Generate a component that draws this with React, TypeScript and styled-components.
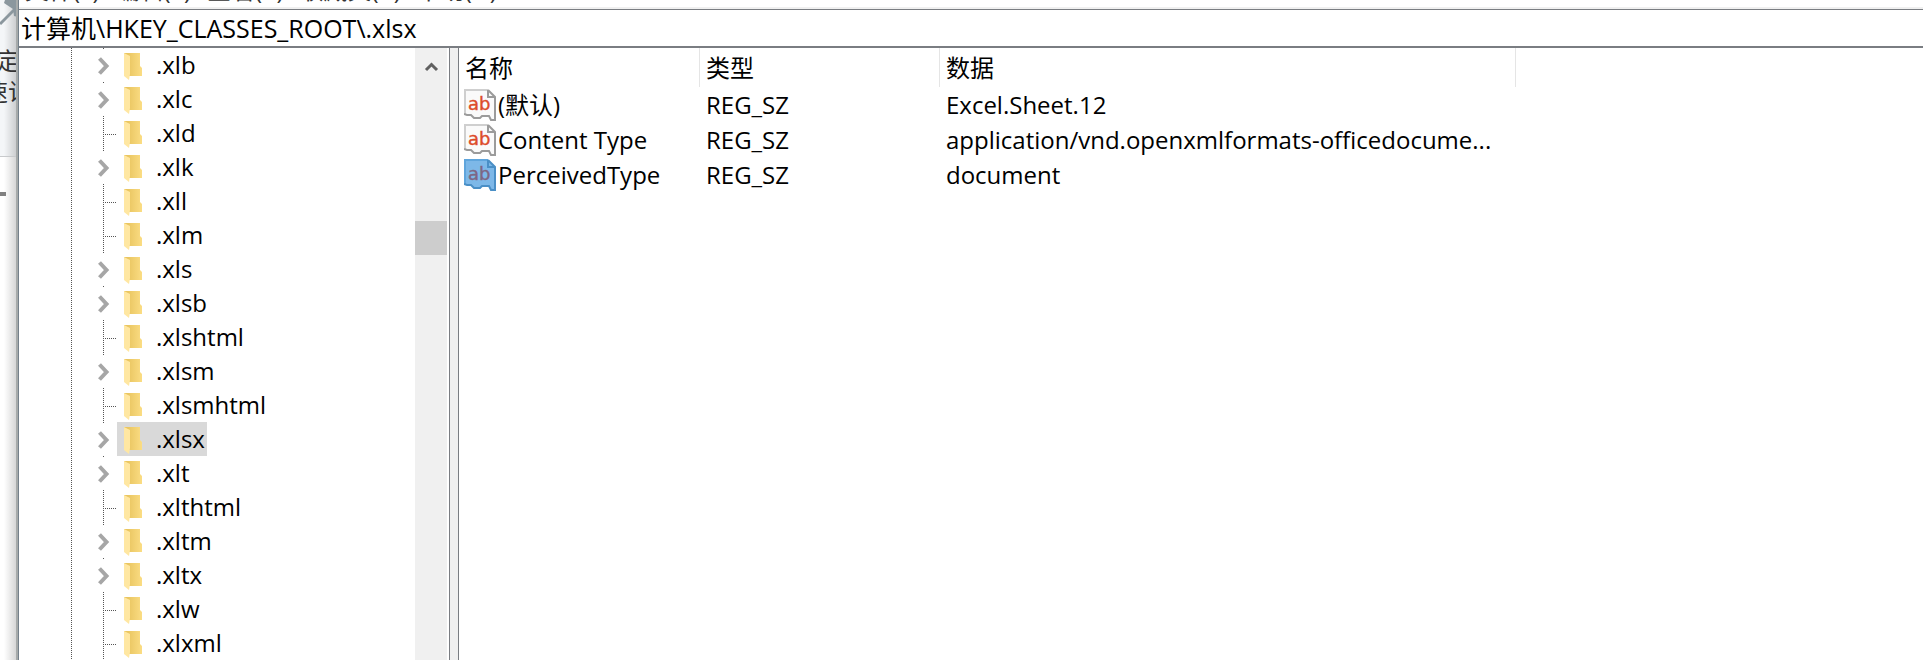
import React from 'react';
import styled, { createGlobalStyle, css } from 'styled-components';

const Global = createGlobalStyle`
  * { box-sizing: border-box; }
  html, body, #root { height: 100%; }
  body {
    margin: 0;
    overflow: hidden;
    background: #fff;
    color: #000;
    font: 24px/34px "Open Sans", "Noto Sans CJK SC", sans-serif;
  }
`;

const Desktop = styled.div`
  display: flex;
  height: 100%;
  overflow: hidden;
`;

const shadow = 'linear-gradient(to right, transparent 4px, rgba(0, 0, 0, 0.16))';

const Backdrop = styled.aside`
  flex: none;
  width: 18px;
  overflow: hidden;
  display: flex;
  flex-direction: column;
  color: #333;
  border-right: 2px solid #a6aaaa;
  background: ${shadow}, #fff;
`;

const BackdropRibbon = styled.div`
  height: 157px;
  flex: none;
  border-bottom: 1px solid #c8cacc;
  background: ${shadow}, #f4f6f8;
  svg { display: block; }
`;

const BackdropText = styled.div`
  display: flex;
  justify-content: center;
  height: 31px;
  line-height: 31px;
  white-space: nowrap;
`;

const BackdropDash = styled.div`
  margin-top: 35px;
  width: 6px;
  height: 4px;
  background: #808080;
`;

const Window = styled.div`
  flex: 1;
  min-width: 0;
  display: flex;
  flex-direction: column;
  border-left: 1px solid #74808a;
`;

const MenuBar = styled.nav`
  flex: none;
  height: 9px;
  display: flex;
  align-items: flex-end;
  gap: 16px;
  padding: 0 6px 5px;
  overflow: hidden;
  border-bottom: 2px solid #f0f0f0;
`;

const MenuButton = styled.button`
  flex: none;
  border: 0;
  padding: 0;
  background: none;
  color: #333;
  font: inherit;
  line-height: 24px;
`;

const AddressInput = styled.input`
  flex: none;
  width: 100%;
  height: 39px;
  padding: 0 2px 3px;
  border: solid #7a7d82;
  border-width: 1px 0 2px;
  border-radius: 0;
  outline: 0;
  background: #fff;
  color: #000;
  font: inherit;
  font-size: 25px;
`;

const Panes = styled.main`
  flex: 1;
  min-height: 0;
  display: flex;
`;

const TreePane = styled.section`
  flex: none;
  width: 431px;
  display: flex;
  border-right: 1px solid #7a7d82;
`;

const dots = (direction: string) =>
  `repeating-linear-gradient(${direction}, #555 0 1px, transparent 1px 2px)`;

const Tree = styled.ul`
  flex: 1;
  margin: 0 0 0 52px;
  padding: 0 0 0 27px;
  list-style: none;
  overflow: hidden;
  background: ${dots('to bottom')} left top / 1px 100% no-repeat;
`;

const TreeRow = styled.li`
  display: flex;
  height: 34px;
`;

const Branch = styled.span`
  flex: none;
  width: 19px;
  background:
    ${dots('to bottom')} 5px 0 / 1px 100% no-repeat,
    ${dots('to right')} 5px 18px / 14px 1px no-repeat;
`;

const Expander = styled.button`
  flex: none;
  width: 19px;
  padding: 0;
  border: 0;
  background: linear-gradient(#555, #555) 5px 0 / 1px 1px no-repeat;
  svg { display: block; }
`;

const Key = styled.a<{ $selected: boolean }>`
  display: flex;
  padding: 0 2px 0 7px;
  gap: 13px;
  color: inherit;
  text-decoration: none;
  background: ${(p) => (p.$selected ? '#d9d9d9' : 'transparent')};
  svg { flex: none; }
`;

const ScrollBar = styled.div`
  flex: none;
  width: 34px;
  border-right: 2px solid #fff;
  background: #f0f0f0;
`;

const ScrollUp = styled.button`
  display: block;
  width: 32px;
  height: 34px;
  padding: 0;
  border: 0;
  background: none;
  svg { display: block; }
`;

const ScrollThumb = styled.div`
  margin-top: 139px;
  height: 34px;
  background: #cdcdcd;
`;

const Splitter = styled.div`
  flex: none;
  width: 8px;
  background: #f0f0f0;
`;

const ListPane = styled.section`
  flex: 1;
  min-width: 0;
  border-left: 1px solid #7a7d82;
`;

const Table = styled.table`
  width: 1057px;
  table-layout: fixed;
  border-collapse: separate;
  border-spacing: 0;
`;

const cell = css`
  padding: 0 6px;
  text-align: left;
  font-weight: 400;
  white-space: nowrap;
  overflow: hidden;
  text-overflow: ellipsis;
`;

const HeadCell = styled.th<{ $width: number }>`
  ${cell}
  width: ${(p) => p.$width}px;
  height: 39px;
  border-right: 1px solid #e5e5e5;
`;

const Cell = styled.td`
  ${cell}
  height: 35px;
`;

const NameCell = styled(Cell)`
  padding: 0 0 0 5px;
`;

const ValueName = styled.div`
  display: flex;
  gap: 2px;
  align-items: center;
  svg { flex: none; }
`;

const FolderIcon = () => (
  <svg width="19" height="34" viewBox="0 0 19 34" aria-hidden="true">
    <defs>
      <linearGradient id="folderBack" x1="0" x2="1">
        <stop offset="0.2" stopColor="#e9c560" />
        <stop offset="1" stopColor="#fbdd84" />
      </linearGradient>
    </defs>
    <path d="M0 5H16V18L18 20V28H0Z" fill="url(#folderBack)" />
    <path d="M0 5L6 8V26L5 32L0 28Z" fill="#ffe7a2" />
  </svg>
);

const ChevronRight = () => (
  <svg width="19" height="34" viewBox="0 0 19 34" aria-hidden="true">
    <path d="M1.500 10.500L8.500 18L1.500 25.500" fill="none" stroke="#a6a6a6" strokeWidth="4" />
  </svg>
);

const ChevronUp = () => (
  <svg width="32" height="34" viewBox="0 0 32 34" aria-hidden="true">
    <path d="M11 22L16.500 16.500L22 22" fill="none" stroke="#606060" strokeWidth="3" />
  </svg>
);

const IconLetters = styled.text`
  font: 18px "DejaVu Sans", sans-serif;
  stroke-width: 0.4px;
`;

const StringIcon = ({ selected }: { selected: boolean }) => {
  const edge = selected ? '#4a8fc6' : '#9b9b9b';
  const ink = selected ? '#7d6684' : '#dd4b2a';
  return (
    <svg width="32" height="32" viewBox="0 0 32 32" aria-hidden="true">
      <path
        d="M1 1H24L31 8V31H27L25 27H18L16 29H10L7 26H3L1 25Z"
        fill={selected ? '#7db8e8' : '#fafafa'}
      />
      <path d="M1 25V1H24" fill="none" stroke={selected ? '#5fa5dc' : '#cfcfcf'} strokeWidth="2" />
      <path
        d="M24 1V8H31M24 1L31 8V31H27L25 27H18L16 29H10L7 26H3L0 25"
        fill="none"
        stroke={edge}
        strokeWidth="2"
      />
      <IconLetters x="4" y="21" fill={ink} stroke={ink}>ab</IconLetters>
    </svg>
  );
};

const PinIcon = () => (
  <svg width="18" height="45" viewBox="0 0 18 45" aria-hidden="true">
    <path d="M5 0H18V17L14 16L13 9L4 3Z" fill="#8b979e" />
    <path d="M0 24L15 9" stroke="#8b979e" strokeWidth="3" />
  </svg>
);

const menus = ['文件(F)', '编辑(E)', '查看(V)', '收藏夹(A)', '帮助(H)'];

const keys: { name: string; expandable?: boolean }[] = [
  { name: '.xlb', expandable: true },
  { name: '.xlc', expandable: true },
  { name: '.xld' },
  { name: '.xlk', expandable: true },
  { name: '.xll' },
  { name: '.xlm' },
  { name: '.xls', expandable: true },
  { name: '.xlsb', expandable: true },
  { name: '.xlshtml' },
  { name: '.xlsm', expandable: true },
  { name: '.xlsmhtml' },
  { name: '.xlsx', expandable: true },
  { name: '.xlt', expandable: true },
  { name: '.xlthtml' },
  { name: '.xltm', expandable: true },
  { name: '.xltx', expandable: true },
  { name: '.xlw' },
  { name: '.xlxml' },
];

const values = [
  { name: '(默认)', type: 'REG_SZ', data: 'Excel.Sheet.12' },
  { name: 'Content Type', type: 'REG_SZ', data: 'application/vnd.openxmlformats-officedocume...' },
  { name: 'PerceivedType', type: 'REG_SZ', data: 'document' },
];

export default function App() {
  const selectedKey = '.xlsx';
  const selectedValue = 'PerceivedType';
  return (
    <>
      <Global />
      <Desktop>
        <Backdrop aria-hidden="true">
          <BackdropRibbon>
            <PinIcon />
            <BackdropText>定</BackdropText>
            <BackdropText>速访</BackdropText>
          </BackdropRibbon>
          <BackdropDash />
        </Backdrop>
        <Window>
          <MenuBar>
            {menus.map((m) => (
              <MenuButton key={m} type="button">{m}</MenuButton>
            ))}
          </MenuBar>
          <AddressInput aria-label="地址" defaultValue={'计算机\\HKEY_CLASSES_ROOT\\.xlsx'} />
          <Panes>
            <TreePane>
              <Tree>
                {keys.map((k) => (
                  <TreeRow key={k.name}>
                    {k.expandable ? (
                      <Expander type="button" aria-label={`展开 ${k.name}`}>
                        <ChevronRight />
                      </Expander>
                    ) : (
                      <Branch />
                    )}
                    <Key href="#" $selected={k.name === selectedKey}>
                      <FolderIcon />
                      {k.name}
                    </Key>
                  </TreeRow>
                ))}
              </Tree>
              <ScrollBar>
                <ScrollUp type="button" aria-label="向上滚动">
                  <ChevronUp />
                </ScrollUp>
                <ScrollThumb />
              </ScrollBar>
            </TreePane>
            <Splitter />
            <ListPane>
              <Table>
                <thead>
                  <tr>
                    <HeadCell $width={241}>名称</HeadCell>
                    <HeadCell $width={240}>类型</HeadCell>
                    <HeadCell $width={576}>数据</HeadCell>
                  </tr>
                </thead>
                <tbody>
                  {values.map((v) => (
                    <tr key={v.name}>
                      <NameCell>
                        <ValueName>
                          <StringIcon selected={v.name === selectedValue} />
                          {v.name}
                        </ValueName>
                      </NameCell>
                      <Cell>{v.type}</Cell>
                      <Cell>{v.data}</Cell>
                    </tr>
                  ))}
                </tbody>
              </Table>
            </ListPane>
          </Panes>
        </Window>
      </Desktop>
    </>
  );
}
